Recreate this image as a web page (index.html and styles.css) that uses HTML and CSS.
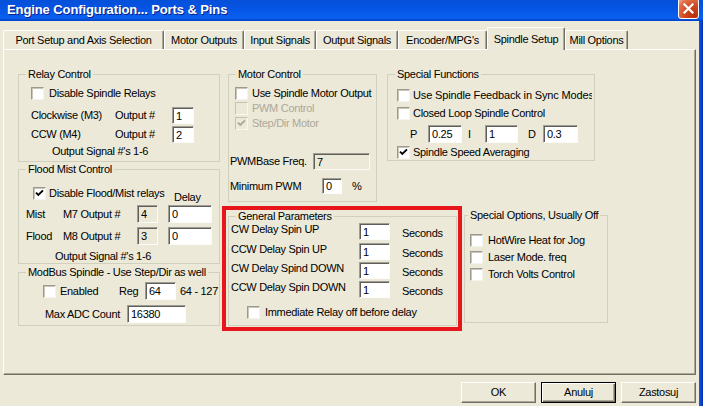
FILE: index.html
```html
<!DOCTYPE html>
<html>
<head>
<meta charset="utf-8">
<title>Engine Configuration... Ports &amp; Pins</title>
<link rel="stylesheet" href="styles.css">
</head>
<body>
<div class="window">
  <div class="titlebar">
    <span class="title">Engine Configuration... Ports &amp; Pins</span>
    <span class="close"><svg width="19" height="19" viewBox="0 0 19 19"><path d="M5.5 5.5 L13.5 13.5 M13.5 5.5 L5.5 13.5" stroke="#fff" stroke-width="2.2" stroke-linecap="square" fill="none"/></svg></span>
  </div>
  <div class="body">
    <div class="client">
      <div class="tabs">
        <div class="tab t1">Port Setup and Axis Selection</div>
        <div class="tab t2">Motor Outputs</div>
        <div class="tab t3">Input Signals</div>
        <div class="tab t4">Output Signals</div>
        <div class="tab t5">Encoder/MPG's</div>
        <div class="tab t6 active">Spindle Setup</div>
        <div class="tab t7">Mill Options</div>
      </div>
      <div class="panel">
        <div class="leftcol">
          <div class="group relay">
            <span class="legend">Relay Control</span>
            <div class="cbrow"><span class="cb"></span><span>Disable Spindle Relays</span></div>
            <div class="row rl-out first"><span class="rl-lab">Clockwise (M3)</span><span class="rl-out-lab">Output #</span><span class="edit rl-edit">1</span></div>
            <div class="row rl-out"><span class="rl-lab">CCW (M4)</span><span class="rl-out-lab">Output #</span><span class="edit rl-edit">2</span></div>
            <div class="row note rl-note">Output Signal #'s 1-6</div>
          </div>
          <div class="group flood">
            <span class="legend">Flood Mist Control</span>
            <div class="fl-head"><span class="cb checked"><svg width="11" height="11" viewBox="0 0 11 11"><path d="M2 4.6 L4.3 7 L9 2.3" stroke="#000" stroke-width="1.9" fill="none"/></svg></span><span class="fl-cblab">Disable Flood/Mist relays</span><span class="fl-delay">Delay</span></div>
            <div class="row fl-row first"><span class="fl-lab">Mist</span><span class="fl-out">M7 Output #</span><span class="edit disabled fl-num">4</span><span class="edit fl-del">0</span></div>
            <div class="row fl-row"><span class="fl-lab">Flood</span><span class="fl-out">M8 Output #</span><span class="edit disabled fl-num">3</span><span class="edit fl-del">0</span></div>
            <div class="row note fl-note">Output Signal #'s 1-6</div>
          </div>
          <div class="group modbus">
            <span class="legend">ModBus Spindle - Use Step/Dir as well</span>
            <div class="row mb-row1"><span class="cb"></span><span class="mb-en">Enabled</span><span class="mb-reg">Reg</span><span class="edit mb-regedit">64</span><span class="mb-range">64 - 127</span></div>
            <div class="row mb-row2"><span class="mb-adc">Max ADC Count</span><span class="edit mb-adcedit">16380</span></div>
          </div>
        </div>
        <div class="rightarea">
          <div class="toprow">
            <div class="group motor">
              <span class="legend">Motor Control</span>
              <div class="cbrow"><span class="cb"></span><span>Use Spindle Motor Output</span></div>
              <div class="cbrow dis"><span class="cb disabled"></span><span>PWM Control</span></div>
              <div class="cbrow dis"><span class="cb disabled checked"><svg width="11" height="11" viewBox="0 0 11 11"><path d="M2 4.6 L4.3 7 L9 2.3" stroke="#ACA899" stroke-width="1.9" fill="none"/></svg></span><span>Step/Dir Motor</span></div>
              <div class="row mc-freq"><span class="mc-freqlab">PWMBase Freq.</span><span class="edit disabled mc-freqedit">7</span></div>
              <div class="row mc-min"><span class="mc-minlab">Minimum PWM</span><span class="edit mc-minedit">0</span><span class="mc-pct">%</span></div>
            </div>
            <div class="group special">
              <span class="legend">Special Functions</span>
              <div class="cbrow sf-clip"><span class="cb"></span><span class="sf-wide">Use Spindle Feedback in Sync Modes</span></div>
              <div class="cbrow sf-second"><span class="cb"></span><span>Closed Loop Spindle Control</span></div>
              <div class="row pid"><span class="pid-p">P</span><span class="edit pid-e1">0.25</span><span class="pid-i">I</span><span class="edit pid-e2">1</span><span class="pid-d">D</span><span class="edit pid-e3">0.3</span></div>
              <div class="cbrow sf-avg"><span class="cb checked"><svg width="11" height="11" viewBox="0 0 11 11"><path d="M2 4.6 L4.3 7 L9 2.3" stroke="#000" stroke-width="1.9" fill="none"/></svg></span><span>Spindle Speed Averaging</span></div>
            </div>
          </div>
          <div class="botrow">
            <div class="group general">
              <span class="legend">General Parameters</span>
              <div class="gp-row"><span class="gp-lab">CW Delay Spin UP</span><span class="edit gp-edit">1</span><span class="gp-sec">Seconds</span></div>
              <div class="gp-row"><span class="gp-lab">CCW Delay Spin UP</span><span class="edit gp-edit">1</span><span class="gp-sec">Seconds</span></div>
              <div class="gp-row"><span class="gp-lab">CW Delay Spind DOWN</span><span class="edit gp-edit">1</span><span class="gp-sec">Seconds</span></div>
              <div class="gp-row"><span class="gp-lab">CCW Delay Spin DOWN</span><span class="edit gp-edit">1</span><span class="gp-sec">Seconds</span></div>
              <div class="cbrow gp-cb"><span class="cb"></span><span>Immediate Relay off before delay</span></div>
            </div>
            <div class="group options">
              <span class="legend">Special Options, Usually Off</span>
              <div class="cbrow"><span class="cb"></span><span>HotWire Heat for Jog</span></div>
              <div class="cbrow"><span class="cb"></span><span>Laser Mode. freq</span></div>
              <div class="cbrow"><span class="cb"></span><span>Torch Volts Control</span></div>
            </div>
          </div>
        </div>
        <div class="annot"></div>
      </div>
      <div class="buttons">
        <span class="btn">OK</span>
        <span class="btn default">Anuluj</span>
        <span class="btn">Zastosuj</span>
      </div>
    </div>
    <div class="frame"></div>
  </div>
</div>
</body>
</html>
```
FILE: styles.css
```css
* { box-sizing: border-box; }
html, body { margin: 0; padding: 0; }
body {
  width: 703px; height: 406px; overflow: hidden;
  background: #ECE9D8;
  font-family: "Liberation Sans", Arial, sans-serif;
  font-size: 11px; letter-spacing: -0.3px; color: #000;
  line-height: 13px;
}
.window { width: 703px; height: 406px; display: flex; flex-direction: column; }

/* title bar */
.titlebar {
  height: 21px; flex: none;
  display: flex; justify-content: space-between; align-items: flex-start;
  padding: 0 4px 0 7px;
  background: linear-gradient(180deg, #0650D8 0%, #0553E2 35%, #085CEC 70%, #0A60F0 85%, #064FD8 93%, #0440C8 100%);
}
.title {
  font: bold 13px "Liberation Sans", Arial, sans-serif;
  letter-spacing: -0.1px; color: #fff; line-height: 20px;
  text-shadow: 1px 1px 0 #0A1E8C;
}
.close {
  width: 21px; height: 21px; margin-top: -2px;
  border: 1px solid #fff; border-radius: 3px;
  background: radial-gradient(circle at 80% 85%, #B8300A 0%, #D24A22 45%, #E0704A 75%, #F2B096 100%);
  display: flex; align-items: center; justify-content: center;
}

.body { flex: 1; display: flex; }
.client { width: 699px; padding-top: 6px; display: flex; flex-direction: column; }
.frame { width: 4px; background: linear-gradient(90deg, #1659E4, #0A48D8 40%, #073DCC 70%, #00239E); }

/* tabs */
.tabs { height: 22px; display: flex; align-items: flex-end; padding-left: 3px; }
.tab {
  height: 19px; text-align: center; white-space: nowrap;
  border-top: 1px solid #fff; border-left: 1px solid #fff;
  border-right: 1px solid #716F64;
  box-shadow: inset -1px 0 0 #ACA899;
  padding-top: 1px; line-height: 16px;
  border-radius: 2px 2px 0 0;
}
.t1 { width: 161px; }
.t2 { width: 80px; }
.t3 { width: 72px; }
.t4 { width: 82px; }
.t5 { width: 89px; }
.t6 { width: 78px; }
.t7 { width: 63px; }
.tab.active {
  height: 23px; margin-bottom: -1px; position: relative; z-index: 2;
  background: #ECE9D8; padding-top: 3px; line-height: 16px;
}

/* panel */
.panel {
  position: relative;
  margin-left: 3px; width: 693px; height: 326px;
  border-top: 1px solid #fff; border-left: 1px solid #fff;
  border-right: 1px solid #716F64; border-bottom: 1px solid #716F64;
  box-shadow: inset -1px -1px 0 #ACA899;
  padding: 24px 0 0 14px;
  display: flex; gap: 8px; align-items: flex-start;
}
.leftcol { width: 202px; display: flex; flex-direction: column; }
.rightarea { display: flex; flex-direction: column; }
.toprow { display: flex; gap: 10px; align-items: flex-start; }
.botrow { display: flex; gap: 7px; align-items: flex-start; margin-top: 13px; }

/* group boxes */
.group { position: relative; border: 1px solid #D0D0BF; flex: none; }
.legend {
  position: absolute; top: -7px; left: 7px;
  padding: 0 2px; background: #ECE9D8; line-height: 13px; white-space: nowrap;
}
.row { display: flex; align-items: center; white-space: nowrap; }
.cbrow { display: flex; align-items: center; height: 13px; white-space: nowrap; }
.cb {
  width: 13px; height: 13px; flex: none;
  background: #fff;
  border: 1px solid; border-color: #9C9A8E #F4F3EE #F4F3EE #9C9A8E;
  box-shadow: inset 1px 1px 0 #C9C6B8;
  display: flex; align-items: center; justify-content: center;
}
.cb svg { display: block; }
.cb.disabled { background: #ECE9D8; border-color: #C5C2B2 #F8F7F2 #F8F7F2 #C5C2B2; box-shadow: none; }
.dis { color: #ACA899; }

.edit {
  flex: none; display: block;
  background: #fff;
  border: 1px solid; border-color: #A09E93 #FBFBF8 #FBFBF8 #A09E93;
  box-shadow: inset 1px 1px 0 #5E5E5A;
  padding: 2px 0 0 3px; line-height: 13px;
}
.edit.disabled { background: #ECE9D8; }

/* relay control */
.relay { width: 202px; height: 88px; padding: 12px 0 0 12px; }
.relay .cb { margin-right: 5px; }
.rl-out { height: 17px; margin-top: 2px; }
.rl-out.first { margin-top: 7px; }
.rl-lab { width: 84px; }
.rl-out-lab { width: 57px; }
.rl-edit { width: 22px; height: 17px; }
.rl-note { height: 13px; margin-top: 2px; padding-left: 21px; }

/* flood */
.flood { width: 202px; height: 95px; margin-top: 7px; padding: 17px 0 0 7px; }
.fl-head { display: flex; align-items: flex-start; height: 17px; white-space: nowrap; padding-left: 7px; }
.fl-head .cb { margin-right: 3px; }
.fl-cblab { width: 125px; }
.fl-delay { margin-top: 4px; }
.fl-row { height: 18px; margin-top: 4px; }
.fl-row.first { margin-top: 1px; }
.fl-lab { width: 37px; }
.fl-out { width: 74px; }
.fl-num { width: 21px; height: 18px; }
.fl-del { width: 44px; height: 18px; margin-left: 10px; }
.fl-note { height: 13px; margin-top: 5px; padding-left: 29px; }

/* modbus */
.modbus { width: 202px; height: 54px; margin-top: 8px; padding-top: 9px; }
.mb-row1 { height: 18px; padding-left: 24px; }
.mb-row1 .cb { margin-right: 4px; }
.mb-en { width: 59px; }
.mb-reg { width: 26px; }
.mb-regedit { width: 31px; height: 18px; }
.mb-range { margin-left: 4px; }
.mb-row2 { height: 18px; margin-top: 5px; padding-left: 26px; }
.mb-adc { width: 82px; }
.mb-adcedit { width: 59px; height: 18px; }

/* motor control */
.motor { width: 149px; height: 128px; padding: 11px 0 0 6px; }
.motor .cbrow { height: 15px; }
.motor .cb { margin-right: 4px; }
.mc-freq { height: 17px; margin-top: 22px; margin-left: -5px; }
.mc-freqlab { width: 83px; }
.mc-freqedit { width: 57px; height: 17px; }
.mc-min { height: 16px; margin-top: 8px; margin-left: -5px; }
.mc-minlab { width: 92px; }
.mc-minedit { width: 20px; height: 16px; padding-top: 1px; }
.mc-pct { margin-left: 10px; }

/* special functions */
.special { width: 208px; height: 87px; padding: 14px 0 0 9px; }
.special .cb { margin-right: 3px; }
.sf-clip { width: 195px; overflow: hidden; }
.sf-wide { letter-spacing: -0.15px; }
.sf-second { margin-top: 5px; }
.pid { height: 18px; margin-top: 5px; padding-left: 13px; }
.pid-p { width: 18px; }
.pid-e1 { width: 34px; height: 18px; }
.pid-i { width: 17px; margin-left: 6px; }
.pid-e2 { width: 33px; height: 18px; }
.pid-d { width: 15px; margin-left: 10px; }
.pid-e3 { width: 35px; height: 18px; }
.sf-avg { margin-top: 3px; }

/* general parameters */
.general { width: 229px; height: 110px; margin-top: 1px; padding: 6px 0 0 2px; }
.gp-row { display: flex; align-items: flex-start; height: 19px; white-space: nowrap; }
.gp-row:first-of-type { height: 20px; }
.gp-lab { width: 128px; }
.gp-edit { width: 31px; height: 17px; }
.gp-sec { margin-left: 12px; margin-top: 4px; }
.gp-cb { margin-top: 6px; padding-left: 16px; }
.gp-cb .cb { margin-right: 5px; }

/* special options */
.options { width: 144px; height: 108px; padding: 16px 0 0 5px; }
.options .legend { left: 3px; }
.options .cbrow { height: 17px; }
.options .cb { margin-right: 5px; }

/* red annotation frame */
.annot {
  position: absolute; left: 218px; top: 156px;
  width: 240px; height: 125px;
  border: 4px solid #E8161C;
  pointer-events: none;
}

/* buttons */
.buttons { display: flex; justify-content: flex-end; gap: 5px; margin-top: 7px; padding-right: 3px; }
.btn {
  width: 75px; height: 21px; text-align: center; line-height: 19px;
  background: #ECE9D8;
  border: 1px solid; border-color: #fff #716F64 #716F64 #fff;
  box-shadow: inset -1px -1px 0 #ACA899;
}
.btn.default {
  border-color: #000;
  box-shadow: inset 1px 1px 0 #fff, inset -1px -1px 0 #716F64, inset -2px -2px 0 #ACA899;
}
```
